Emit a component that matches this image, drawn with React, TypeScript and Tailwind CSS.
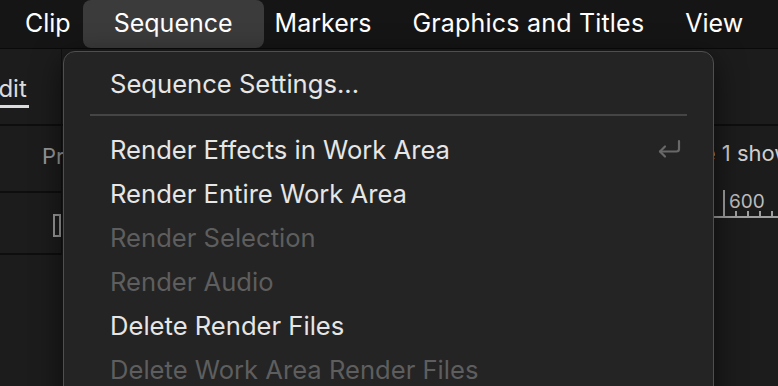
import React from 'react';

const items = [
  { label: 'Render Effects in Work Area', on: true, shortcut: true },
  { label: 'Render Entire Work Area', on: true },
  { label: 'Render Selection', on: false },
  { label: 'Render Audio', on: false },
  { label: 'Delete Render Files', on: true },
  { label: 'Delete Work Area Render Files', on: false },
];

const ReturnIcon = () => (
  <svg width="26" height="22" viewBox="0 0 26 22" fill="none" stroke="#686868" strokeWidth="2.2" strokeLinecap="round" strokeLinejoin="round">
    <path d="M23 2v8a2.5 2.5 0 0 1-2.5 2.5H4" />
    <path d="M9 7.5L4 12.5 9 17.5" />
  </svg>
);

export default function App() {
  return (
    <div className="relative w-[778px] h-[386px] overflow-hidden bg-[#1c1c1c]" style={{ fontFamily: 'Inter, "Noto Sans", sans-serif' }}>
      {/* top menu bar */}
      <div className="flex h-[49px] items-center bg-[#151515] text-[25px] text-white border-b border-[#0a0a0a]">
        <div className="pl-[25px] pr-[12px]">Clip</div>
        <div className="h-full flex items-center px-[31px] bg-[#3b3b3b] rounded-[8px]">Sequence</div>
        <div className="pl-[11px]">Markers</div>
        <div className="pl-[41px] tracking-[0.2px]">Graphics and Titles</div>
        <div className="pl-[41px]">View</div>
      </div>

      {/* app behind the menu */}
      <div className="flex">
        <div className="w-[62px] flex flex-col border-r border-[#111]">
          <div className="h-[77px] flex items-end pb-[16px] border-b-2 border-[#0e0e0e]">
            <div className="-ml-[16px] text-[24px] text-[#dcdcdc] leading-[28px] border-b-[3px] border-[#dcdcdc] pb-[2px] pr-[2px]">Edit</div>
          </div>
          <div className="h-[67px] flex items-center pl-[42px] pb-[4px] text-[22px] text-[#9a9a9a] border-b-2 border-[#0e0e0e]">Pr</div>
          <div className="h-[62px] flex items-center pl-[53px] pt-[4px] border-b-2 border-[#0e0e0e]">
            <div className="w-[14px] h-[23px] border-2 border-[#9a9a9a]" />
          </div>
        </div>
        <div className="flex-1 flex flex-col">
          <div className="h-[77px] border-b-2 border-[#0e0e0e]" />
          <div className="h-[64px] flex items-start pt-[13px] justify-end text-[22px] leading-[28px] text-[#cfcfcf] whitespace-nowrap">
            <span className="-mr-[26px]">Title 1 shows</span>
          </div>
          <div className="flex justify-end">
            <div className="w-[64px] h-[28px] relative border-b-2 border-[#a0a0a0]">
              <div className="absolute left-[9px] top-0 w-[2px] h-[28px] bg-[#a0a0a0]" />
              <div className="absolute left-[15px] top-[1px] text-[19px] leading-[22px] text-[#bdbdbd]">600</div>
              <div className="absolute left-[21px] bottom-0 w-[2px] h-[5px] bg-[#a0a0a0]" />
              <div className="absolute left-[33px] bottom-0 w-[2px] h-[5px] bg-[#a0a0a0]" />
              <div className="absolute left-[45px] bottom-0 w-[2px] h-[5px] bg-[#a0a0a0]" />
              <div className="absolute left-[57px] bottom-0 w-[2px] h-[5px] bg-[#a0a0a0]" />
            </div>
          </div>
        </div>
      </div>

      {/* dropdown menu */}
      <div className="absolute left-[63px] top-[51px] w-[651px] h-[360px] bg-[#242424] border border-[#4f4f4f] rounded-[12px] shadow-[0_8px_30px_rgba(0,0,0,0.6)]">
        <div className="h-[62px] flex items-center pl-[46px] pt-[2px] text-[25.6px] text-[#e6e6e6]">Sequence Settings...</div>
        <div className="mx-[26px] h-[2px] bg-[#454545]" />
        <div className="pt-[12px]">
          {items.map((it) => (
            <div key={it.label} className="h-[44px] flex items-center justify-between pl-[46px] pr-[31px] text-[25.6px]">
              <span className={it.on ? 'text-[#e6e6e6]' : 'text-[#5e5e5e]'}>{it.label}</span>
              {it.shortcut && <ReturnIcon />}
            </div>
          ))}
        </div>
      </div>
    </div>
  );
}
